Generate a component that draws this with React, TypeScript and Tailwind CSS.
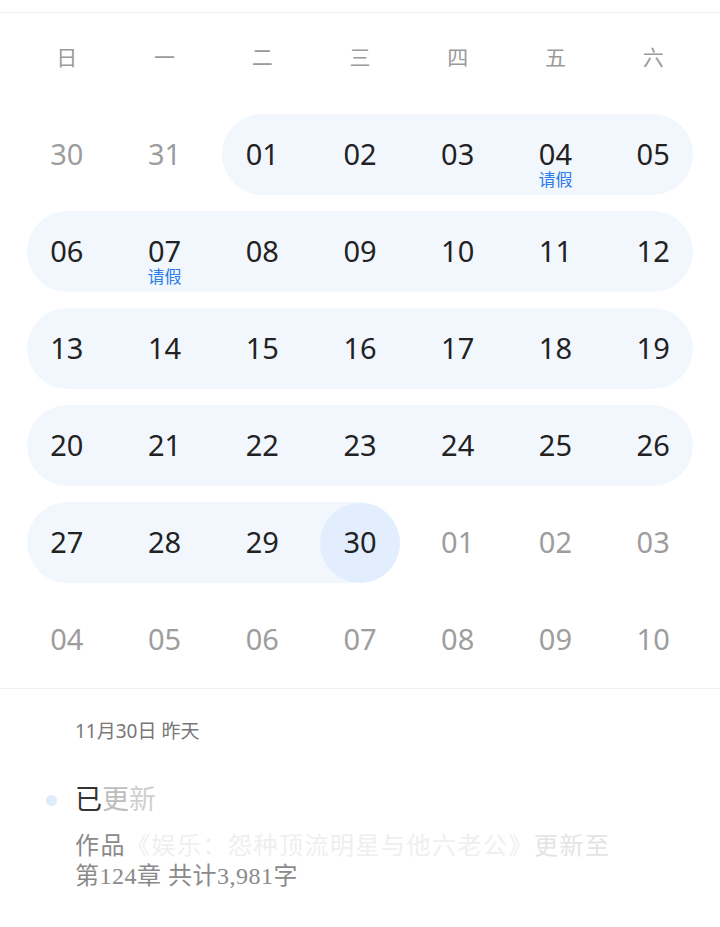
import React from 'react';

type Day = {
  label: string;
  muted?: boolean;
  note?: string;
  selected?: boolean;
};

type Week = {
  days: Day[];
  // which stretch of the week the pale bar covers
  bar?: 'full' | 'fromTue' | 'toWed';
};

const WEEKDAYS = ['日', '一', '二', '三', '四', '五', '六'];

const WEEKS: Week[] = [
  {
    bar: 'fromTue',
    days: [
      { label: '30', muted: true },
      { label: '31', muted: true },
      { label: '01' },
      { label: '02' },
      { label: '03' },
      { label: '04', note: '请假' },
      { label: '05' },
    ],
  },
  {
    bar: 'full',
    days: [
      { label: '06' },
      { label: '07', note: '请假' },
      { label: '08' },
      { label: '09' },
      { label: '10' },
      { label: '11' },
      { label: '12' },
    ],
  },
  {
    bar: 'full',
    days: ['13', '14', '15', '16', '17', '18', '19'].map((label) => ({ label })),
  },
  {
    bar: 'full',
    days: ['20', '21', '22', '23', '24', '25', '26'].map((label) => ({ label })),
  },
  {
    bar: 'toWed',
    days: [
      { label: '27' },
      { label: '28' },
      { label: '29' },
      { label: '30', selected: true },
      { label: '01', muted: true },
      { label: '02', muted: true },
      { label: '03', muted: true },
    ],
  },
  {
    days: ['04', '05', '06', '07', '08', '09', '10'].map((label) => ({ label, muted: true })),
  },
];

// full class names so tailwind picks them up
const COL_START = [
  'col-start-1',
  'col-start-2',
  'col-start-3',
  'col-start-4',
  'col-start-5',
  'col-start-6',
  'col-start-7',
];

const BAR_CLASS: Record<NonNullable<Week['bar']>, string> = {
  full: 'col-start-1 col-end-8',
  fromTue: 'col-start-3 col-end-8',
  toWed: 'col-start-1 col-end-5',
};

function DayCell({ day, index }: { day: Day; index: number }) {
  return (
    <div className={`${COL_START[index]} row-start-1 flex items-center justify-center`}>
      <div
        className={`relative flex h-[80px] w-[80px] items-center justify-center rounded-full ${
          day.selected ? 'bg-[#e2eefd]' : ''
        }`}
      >
        <span className={`-mt-[1px] text-[29px] leading-[26px] ${day.muted ? 'text-[#9d9d9d]' : 'text-[#222222]'}`}>
          {day.label}
        </span>
        {day.note && (
          <span className="absolute left-1/2 top-[57px] -translate-x-1/2 whitespace-nowrap text-[17px] leading-[16px] text-[#2b7de9]">
            {day.note}
          </span>
        )}
      </div>
    </div>
  );
}

function WeekRow({ week }: { week: Week }) {
  return (
    <div className="grid h-[97px] grid-cols-7 grid-rows-1">
      {week.bar && <div className={`${BAR_CLASS[week.bar]} row-start-1 mx-[9px] my-[8px] rounded-full bg-[#f2f7fe]`} />}
      {week.days.map((day, i) => (
        <DayCell key={i} day={day} index={i} />
      ))}
    </div>
  );
}

export default function App() {
  return (
    <div
      className="min-h-[927px] w-[720px] bg-white"
      style={{ fontFamily: '"Noto Sans", "Noto Sans CJK SC", sans-serif' }}
    >
      <div className="h-[13px] border-b border-[#efefef]" />

      {/* Calendar */}
      <div className="px-[18px]">
        <div className="grid h-[93px] grid-cols-7 items-center pb-[4px]">
          {WEEKDAYS.map((w) => (
            <div key={w} className="text-center text-[21px] leading-none text-[#9a9a9a]">
              {w}
            </div>
          ))}
        </div>
        {WEEKS.map((week, i) => (
          <WeekRow key={i} week={week} />
        ))}
      </div>

      {/* Day detail */}
      <div className="border-t border-[#f0f0f0] pl-[75px] pt-[30px]">
        <div className="text-[19px] leading-[24px] text-[#777777]">11月30日 昨天</div>

        <div className="relative mt-[39px]">
          <span className="absolute left-[-29px] top-[13px] h-[11px] w-[11px] rounded-full bg-[#deebfb]" />
          <div className="text-[27px] leading-[34px]">
            <span className="text-[#333333]">已</span>
            <span className="text-[#bdbdbd]">更</span>
            <span className="text-[#cfcfcf]">新</span>
          </div>
        </div>

        <div className="mt-[14px] w-[545px] text-[24px] leading-[30px] tracking-[1.5px]">
          <span className="text-[#8a8a8a]">作品</span>
          <span className="text-[#efefef]">《娱乐：怨种顶流明星与他六老公》</span>
          <span className="text-[#e4e4e4]">更新至</span>
          <span
            className="text-[#8a8a8a] tracking-[0.5px]"
            style={{ fontFamily: '"Liberation Serif", "Noto Sans CJK SC", serif' }}
          >
            第124章 共计3,981字
          </span>
        </div>
      </div>
    </div>
  );
}
